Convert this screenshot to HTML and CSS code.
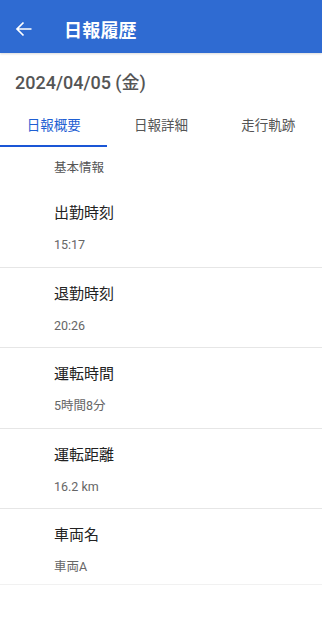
FILE: index.html
```html
<!DOCTYPE html>
<html lang="ja">
<head>
<meta charset="utf-8">
<link rel="stylesheet" href="styles.css">
</head>
<body>
<header class="appbar">
  <span class="back">
    <svg width="24" height="24" viewBox="0 0 24 24"><path d="M19.5 12H5M11.5 5.5L5 12l6.5 6.5" fill="none" stroke="#fff" stroke-width="1.7"/></svg>
  </span>
  <h1 class="title">日報履歴</h1>
</header>
<div class="date">2024/04/05 (金)</div>
<nav class="tabs">
  <div class="tab active">日報概要</div>
  <div class="tab">日報詳細</div>
  <div class="tab">走行軌跡</div>
</nav>
<div class="section">基本情報</div>
<ul class="list">
  <li class="item"><div class="label">出勤時刻</div><div class="value">15:17</div></li>
  <li class="item"><div class="label">退勤時刻</div><div class="value">20:26</div></li>
  <li class="item"><div class="label">運転時間</div><div class="value">5時間8分</div></li>
  <li class="item"><div class="label">運転距離</div><div class="value">16.2 km</div></li>
  <li class="item last"><div class="label">車両名</div><div class="value">車両A</div></li>
</ul>
</body>
</html>
```
FILE: styles.css
```css
* { box-sizing: border-box; }
html, body { margin: 0; padding: 0; background: #fff; }
body {
  font-family: Roboto, "Noto Sans CJK JP", "Noto Sans", sans-serif;
  width: 322px;
  color: #222;
}
.appbar {
  height: 53px;
  background: #2f6bd2;
  display: flex;
  align-items: center;
  padding: 4px 0 0 12px;
  box-shadow: 0 1px 2px rgba(0,0,0,0.15);
}
.back { width: 24px; height: 24px; display: flex; }
.title {
  margin: 0 0 0 28px;
  font-size: 18px;
  font-weight: 700;
  color: #fff;
  letter-spacing: 0.2px;
}
.date {
  height: 53px;
  padding: 15px 0 0 15px;
  font-size: 18px;
  font-weight: 500;
  color: #555;
}
.tabs {
  display: grid;
  grid-template-columns: repeat(3, 1fr);
  height: 41px;
}
.tab {
  display: flex;
  align-items: center;
  justify-content: center;
  font-size: 13.5px;
  color: #555;
  padding-bottom: 3px;
  border-bottom: 2px solid transparent;
}
.tab.active { color: #1f5fd3; border-bottom-color: #1a56d6; }
.section {
  height: 40px;
  padding: 10px 0 0 54px;
  font-size: 12.5px;
  color: #555;
}
.list { list-style: none; margin: 0; padding: 0; }
.item {
  height: 80.5px;
  padding: 15px 0 0 54px;
  border-bottom: 1.5px solid #e6e6e6;
}
.item.last { height: 76px; border-bottom: 1px solid #f1f1f1; }
.label {
  font-size: 15px;
  line-height: 22px;
  color: #222;
}
.value {
  margin-top: 11px;
  font-size: 12.5px;
  line-height: 20px;
  color: #666;
}
```
